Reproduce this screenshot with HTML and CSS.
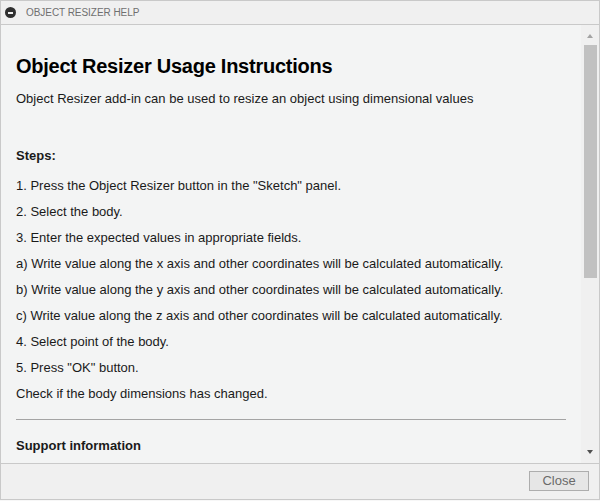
FILE: index.html
```html
<!DOCTYPE html>
<html>
<head>
<meta charset="utf-8">
<link rel="stylesheet" href="styles.css">
</head>
<body>
<div class="dialog">
  <div class="titlebar">
    <span class="min-icon"></span>
    <span class="title-text">OBJECT RESIZER HELP</span>
  </div>
  <div class="body">
    <div class="content">
      <h1 class="heading">Object Resizer Usage Instructions</h1>
      <div class="line intro">Object Resizer add-in can be used to resize an object using dimensional values</div>
      <div class="line bold steps">Steps:</div>
      <div class="line">1. Press the Object Resizer button in the "Sketch" panel.</div>
      <div class="line">2. Select the body.</div>
      <div class="line">3. Enter the expected values in appropriate fields.</div>
      <div class="line">a) Write value along the x axis and other coordinates will be calculated automatically.</div>
      <div class="line">b) Write value along the y axis and other coordinates will be calculated automatically.</div>
      <div class="line">c) Write value along the z axis and other coordinates will be calculated automatically.</div>
      <div class="line">4. Select point of the body.</div>
      <div class="line">5. Press "OK" button.</div>
      <div class="line">Check if the body dimensions has changed.</div>
      <div class="rule"></div>
      <div class="line bold">Support information</div>
    </div>
    <div class="scrollbar">
      <span class="arrow up"></span>
      <span class="thumb"></span>
      <span class="spacer"></span>
      <span class="arrow down"></span>
    </div>
  </div>
  <div class="footer">
    <button class="close-btn">Close</button>
  </div>
</div>
</body>
</html>
```
FILE: styles.css
```css
* { box-sizing: border-box; }
html, body {
  margin: 0;
  padding: 0;
  background: #f7f7f7;
}
body {
  font-family: "Liberation Sans", Arial, sans-serif;
  width: 600px;
  height: 501px;
  overflow: hidden;
}
.dialog {
  width: 600px;
  height: 500px;
  border: 1px solid #c9c9c9;
  display: flex;
  flex-direction: column;
  background: #f0f0f0;
}
.titlebar {
  height: 24px;
  flex: none;
  border-bottom: 1px solid #c9c9c9;
  display: flex;
  align-items: center;
  padding-left: 4px;
  background: #f0f0f0;
}
.min-icon {
  width: 11px;
  height: 11px;
  border-radius: 50%;
  background: #303030;
  position: relative;
  margin-right: 10px;
}
.min-icon::after {
  content: "";
  position: absolute;
  left: 3px;
  top: 5px;
  width: 5px;
  height: 1.5px;
  background: #f0f0f0;
}
.title-text {
  font-size: 10px;
  color: #6f6f6f;
  letter-spacing: -0.05px;
}
.body {
  flex: 1;
  display: flex;
  min-height: 0;
}
.content {
  flex: 1;
  background: #f3f4f4;
  overflow: hidden;
  padding: 29px 15px 0 15px;
  color: #1a1a1a;
}
.heading {
  margin: 0 0 8px;
  font-size: 20px;
  line-height: 24px;
  font-weight: bold;
  letter-spacing: -0.25px;
  color: #000;
}
.line {
  font-size: 13px;
  line-height: 26px;
  white-space: nowrap;
}
.bold { font-weight: bold; }
.intro { margin-bottom: 31px; }
.steps { margin-bottom: 4px; }
.rule {
  height: 1px;
  background: #a4a4a4;
  margin: 12px 0 13px;
}
.scrollbar {
  width: 18px;
  flex: none;
  background: #f0f0f0;
  display: flex;
  flex-direction: column;
  align-items: center;
  padding: 9px 0 9px;
}
.arrow {
  width: 0;
  height: 0;
  border-left: 3.5px solid transparent;
  border-right: 3.5px solid transparent;
  flex: none;
}
.arrow.up { border-bottom: 4px solid #a3a3a3; }
.arrow.down { border-top: 4px solid #505050; }
.thumb {
  width: 13px;
  height: 233px;
  background: #c1c1c1;
  margin-top: 7px;
  flex: none;
}
.spacer { flex: 1; }
.footer {
  height: 36px;
  flex: none;
  border-top: 1px solid #c9c9c9;
  display: flex;
  justify-content: flex-end;
  align-items: flex-start;
  padding: 7px 10px 0 0;
}
.close-btn {
  width: 60px;
  height: 20px;
  border: 1px solid #adadad;
  background: #e6e6e6;
  color: #6a6a6a;
  font-family: "Liberation Sans", Arial, sans-serif;
  font-size: 13px;
  padding: 0;
  line-height: 18px;
}
```
